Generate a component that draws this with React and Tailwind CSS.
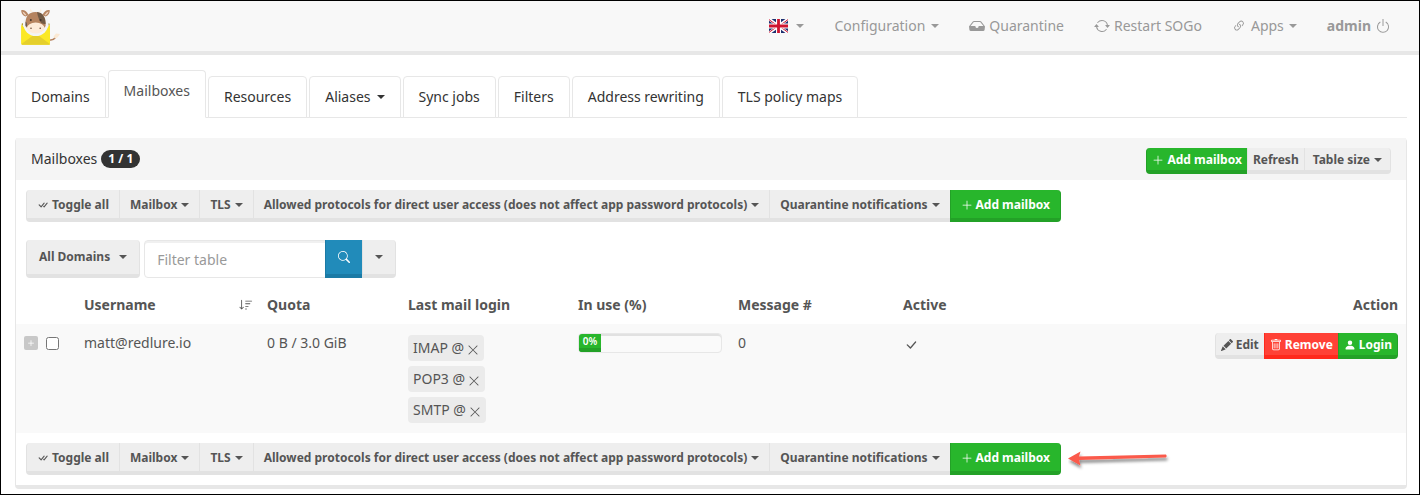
import React from "react";
import {
  BsArrowRepeat,
  BsCheckAll,
  BsCheckLg,
  BsInboxFill,
  BsLink45Deg,
  BsPencilFill,
  BsPersonFill,
  BsPlus,
  BsPlusLg,
  BsPower,
  BsSearch,
  BsSortDown,
  BsTrash,
  BsXLg,
} from "react-icons/bs";

function Caret() {
  return <span aria-hidden="true" className="inline-block border-x-4 border-t-4 border-x-transparent border-t-current" />;
}

function Logo() {
  return (
    <svg viewBox="0 0 40 38" className="h-[38px] w-10" role="img" aria-label="mailcow">
      <path d="M30 33 Q33 33.500 35.500 30.500" fill="none" stroke="#b5835f" strokeWidth="1.6" />
      <path d="M33.5 29.500 L36 26.500 L40 27 L37.5 30.5 L35 31.5Z" fill="#fbe9d3" />
      <path d="M1.3 17.5 L5 21 H27 L30 17.5 V36.5 Q30 37.7 29 37.7 H2.3 Q1.3 37.7 1.3 36.5Z" fill="#f5e021" />
      <path d="M1.3 37 L13 28 H18.5 L30 37 Q30 37.7 29 37.7 H2.3Z" fill="#e5cf2c" />
      <path d="M1.3 19 L13 28.5 L1.3 37Z M30 19 L18.5 28.5 L30 37Z" fill="#fbe825" />
      <path d="M1.3 17 L3 16 V19Z M30 17 L28.3 16 V19Z" fill="#b8a233" />
      <circle cx="15.8" cy="16.5" r="12.6" fill="#f3f4f5" />
      <path d="M10 5 Q9 3.5 10.5 1.5 Q11.5 4 13.5 4.5Z M21 5 Q22 3.5 21 1.5 Q20 4 18 4.5Z" fill="#fdeedd" />
      <path d="M8.5 8 Q6 2.5 1.2 3.2 Q1 7.5 5.5 9.5Z" fill="#b5835f" />
      <path d="M22.5 8 Q25 2.5 29.8 3.2 Q30 7.5 25.5 9.5Z" fill="#b5835f" />
      <path d="M6.5 8 Q4.5 5 2.3 4.6 Q3 7 5.5 8.6Z M24.5 8 Q26.5 5 28.7 4.6 Q28 7 25.5 8.6Z" fill="#f0d3bd" />
      <path d="M5.6 19 Q4.5 5 15.5 5 Q26.5 5 25.6 19 Q23 24 15.6 24 Q8 24 5.6 19Z" fill="#b5835f" />
      <path d="M17 5.1 Q25.5 6 25.6 17 Q21.5 17.5 19.5 13.5 Q17.5 9 17 5.1Z" fill="#715a45" />
      <path d="M5.6 14.5 Q7.5 16.5 6.4 20 L5.6 19Z" fill="#4c4a50" />
      <ellipse cx="15.7" cy="21" rx="8.8" ry="5.4" fill="#fdebd9" />
      <circle cx="10.8" cy="13" r="1" fill="#40332c" />
      <circle cx="20.6" cy="13" r="1" fill="#40332c" />
      <circle cx="11" cy="21.3" r=".8" fill="#6b4a38" />
      <circle cx="20.2" cy="21.3" r=".8" fill="#6b4a38" />
    </svg>
  );
}

function FlagGB() {
  return (
    <svg viewBox="0 0 19 14" className="h-[14px] w-[19px]" role="img" aria-label="English">
      <path d="M0 0H19V14H0Z" fill="#1d2f6f" />
      <path d="M0 0L19 14M19 0L0 14" stroke="#fff" strokeWidth="3" />
      <path d="M0 .6L8 6.4M19 .6L11 6.4M0 13.4L8 7.6M19 13.4L11 7.6" stroke="#cf1430" strokeWidth="1" />
      <path d="M9.5 0V14M0 7H19" stroke="#fff" strokeWidth="5" />
      <path d="M9.5 0V14M0 7H19" stroke="#cf1430" strokeWidth="2.8" />
    </svg>
  );
}

function NavLink({ children, className = "gap-1" }) {
  return (
    <a href="#" className={`flex items-center text-[#999] ${className}`}>
      {children}
    </a>
  );
}

const tones = {
  gray: "border-[#e2e2e2] bg-[#eee] text-[#555]",
  green: "border-[#23a127] bg-[#28b62c] text-white",
  red: "border-[#ff291c] bg-[#ff4136] text-white",
  blue: "border-[#1b7aa5] bg-[#218bba] text-white",
};

const sizes = {
  xs: "h-[26px] px-[5px] pt-[2px]",
  xsWide: "h-[26px] px-2 pt-[2px]",
  sm: "h-8 px-[10px] pt-[2px]",
  md: "h-[38px] px-3",
};

function Button({ tone = "gray", size = "sm", caret, gap, className = "", children, ...rest }) {
  return (
    <button
      type="button"
      aria-haspopup={caret ? "menu" : undefined}
      className={`-ml-px flex items-center border-x border-b-4 text-xs font-bold whitespace-nowrap first:ml-0 first:rounded-l-sm last:rounded-r-sm ${
        gap || (caret ? "gap-1" : "gap-[3px]")
      } ${tones[tone]} ${sizes[size]} ${className}`}
      {...rest}
    >
      {children}
      {caret && <Caret />}
    </button>
  );
}

function Toolbar({ children }) {
  return (
    <div className="flex items-center gap-[7px] p-[10px]">
      <div className="flex">
        <Button>
          <BsCheckAll className="size-3" />
          Toggle all
        </Button>
        <Button caret>Mailbox</Button>
        <Button caret>TLS</Button>
        <Button caret>Allowed protocols for direct user access (does not affect app password protocols)</Button>
        <Button caret>Quarantine notifications</Button>
        <Button tone="green">
          <BsPlusLg className="size-3" />
          Add mailbox
        </Button>
      </div>
      {children}
    </div>
  );
}

function Arrow() {
  return (
    <svg viewBox="0 0 104 30" className="h-[30px] w-[104px]" aria-hidden="true">
      <defs>
        <filter id="arrow-shadow" x="-10%" y="-30%" width="120%" height="190%">
          <feDropShadow dx="1" dy="3" stdDeviation="1.5" floodColor="#000" floodOpacity="0.45" />
        </filter>
      </defs>
      <path
        d="M0 14.5 L12.5 7.5 L11 12.5 L98 10.5 Q99.5 11.9 98 13.5 L11 16 L12.5 21.5Z"
        fill="#fb5a4b"
        filter="url(#arrow-shadow)"
      />
    </svg>
  );
}

const tabs = ["Domains", "Mailboxes", "Resources", "Aliases", "Sync jobs", "Filters", "Address rewriting", "TLS policy maps"];

function Tabs() {
  return (
    <nav aria-label="Mail setup" className="flex items-end gap-[2px] border-b border-[#e7e7e7]">
      {tabs.map((tab) => {
        const active = tab === "Mailboxes";
        return (
          <a
            key={tab}
            href="#"
            aria-current={active ? "page" : undefined}
            className={`-mb-px flex items-center gap-[6px] rounded-t-sm border border-[#e7e7e7] bg-white px-[15px] pt-[10px] leading-5 ${
              active ? "border-b-white pb-4 text-[#555]" : "pb-[10px] text-[#333]"
            }`}
          >
            {tab}
            {tab === "Aliases" && <Caret />}
          </a>
        );
      })}
    </nav>
  );
}

function Logins() {
  return (
    <div className="flex flex-col items-start gap-[5px] pt-[2px]">
      {["IMAP @", "POP3 @", "SMTP @"].map((name) => (
        <span key={name} className="flex h-[26px] items-center gap-[3px] rounded-sm bg-[#ebebeb] px-[5px]">
          {name}
          <BsXLg className="mt-[3px] size-3" />
        </span>
      ))}
    </div>
  );
}

function Usage() {
  return (
    <div className="h-5 w-full overflow-hidden rounded-sm border border-[#e7e7e7] bg-[#fafafa] shadow-[inset_0_2px_0_#e1e1e1]">
      <div
        role="progressbar"
        aria-label="Quota in use"
        aria-valuenow={0}
        className="h-[18px] w-[22px] border-b-4 border-[#23a127] bg-[#28b62c] text-center text-[10px] leading-[15px] font-semibold text-white"
      >
        0%
      </div>
    </div>
  );
}

const columns = [
  { label: "", width: "w-[60px]" },
  { label: "Username", width: "w-[183px]", sorted: true },
  { label: "Quota", width: "w-[141px]" },
  { label: "Last mail login", width: "w-[170px]" },
  { label: "In use (%)", width: "w-[160px]" },
  { label: "Message #", width: "w-[165px]" },
  { label: "Active", width: "w-[165px]" },
  { label: "Action", width: "", right: true },
];

function MailboxTable() {
  return (
    <table className="w-full table-fixed border-collapse text-left">
      <colgroup>
        {columns.map((c) => (
          <col key={c.label} className={c.width} />
        ))}
      </colgroup>
      <thead>
        <tr className="leading-5">
          {columns.map((c) => (
            <th key={c.label} className={`pb-[9px] pl-2 ${c.sorted ? "pr-[6px]" : "pr-2"} ${c.right ? "text-right" : ""}`}>
              <span className={c.sorted ? "flex items-center justify-between" : ""}>
                {c.label}
                {c.sorted && <BsSortDown className="size-[14px]" />}
              </span>
            </th>
          ))}
        </tr>
      </thead>
      <tbody>
        <tr className="bg-[#f9f9f9] align-top leading-5 [&>td]:px-2 [&>td]:pt-[9px] [&>td]:pb-[10px]">
          <td>
            <div className="flex items-center gap-2 pt-[3px]">
              <button
                type="button"
                aria-label="Show details"
                className="flex size-[14px] items-center justify-center rounded-xs bg-[#c8c8c8] text-white"
              >
                <BsPlus className="size-3" />
              </button>
              <input type="checkbox" aria-label="Select matt@redlure.io" className="size-[13px]" />
            </div>
          </td>
          <td>matt@redlure.io</td>
          <td>0 B / 3.0 GiB</td>
          <td>
            <Logins />
          </td>
          <td>
            <Usage />
          </td>
          <td>0</td>
          <td>
            <BsCheckLg className="mt-[5px] ml-[1px] size-[14px]" aria-label="Yes" />
          </td>
          <td>
            <div className="flex justify-end">
              <Button size="xs">
                <BsPencilFill className="size-3" />
                Edit
              </Button>
              <Button size="xs" tone="red">
                <BsTrash className="size-3" />
                Remove
              </Button>
              <Button size="xs" tone="green">
                <BsPersonFill className="size-3" />
                Login
              </Button>
            </div>
          </td>
        </tr>
      </tbody>
    </table>
  );
}

export default function App() {
  return (
    <div className="min-h-screen border border-black bg-white font-['Noto_Sans',sans-serif] text-sm text-[#555]">
      <header className="flex h-[54px] items-center justify-between border-b-4 border-[#e7e7e7] bg-[#f8f8f8] pr-[28px] pl-[19px]">
        <a href="#" aria-label="Home">
          <Logo />
        </a>
        <nav aria-label="Main" className="flex items-center gap-[30px]">
          <NavLink className="gap-2">
            <FlagGB />
            <Caret />
          </NavLink>
          <NavLink className="gap-[6px]">
            Configuration <Caret />
          </NavLink>
          <NavLink>
            <BsInboxFill className="size-4" />
            Quarantine
          </NavLink>
          <NavLink>
            <BsArrowRepeat className="size-4" />
            Restart SOGo
          </NavLink>
          <NavLink className="gap-[5px]">
            <BsLink45Deg className="size-[14px]" />
            Apps <Caret />
          </NavLink>
          <NavLink className="gap-1 font-bold">
            admin
            <BsPower className="size-4" />
          </NavLink>
        </nav>
      </header>

      <main className="pt-[15px] pr-3 pb-[5px] pl-[14px]">
        <Tabs />

        <section className="mt-5 rounded-sm border-x border-b-4 border-[#e7e7e7]">
          <div className="flex h-[42px] items-center justify-between bg-[#f5f5f5] px-[15px]">
            <h1 className="flex items-center gap-1 text-[#333]">
              Mailboxes
              <span className="rounded-full bg-[#333] px-[7px] text-xs leading-[18px] font-bold text-white">1 / 1</span>
            </h1>
            <div className="flex pt-1">
              <Button size="xs" tone="green">
                <BsPlusLg className="size-3" />
                Add mailbox
              </Button>
              <Button size="xs">Refresh</Button>
              <Button size="xsWide" caret>
                Table size
              </Button>
            </div>
          </div>

          <Toolbar />

          <div className="flex gap-1 px-[10px] pt-2 pb-[17px]">
            <Button size="md" gap="gap-[9px]" className="rounded-sm" caret>
              All Domains
            </Button>
            <div className="flex">
              <input
                type="search"
                aria-label="Filter table"
                placeholder="Filter table"
                className="h-[38px] w-[182px] rounded-l-sm border border-[#e7e7e7] px-3 shadow-[inset_0_2px_0_#f0f0f0] placeholder:text-[#999]"
              />
              <Button size="md" tone="blue" aria-label="Search">
                <BsSearch className="size-3" />
              </Button>
              <Button size="md" caret aria-label="Filter options" />
            </div>
          </div>

          <MailboxTable />

          <Toolbar>
            <Arrow />
          </Toolbar>
        </section>
      </main>
    </div>
  );
}
